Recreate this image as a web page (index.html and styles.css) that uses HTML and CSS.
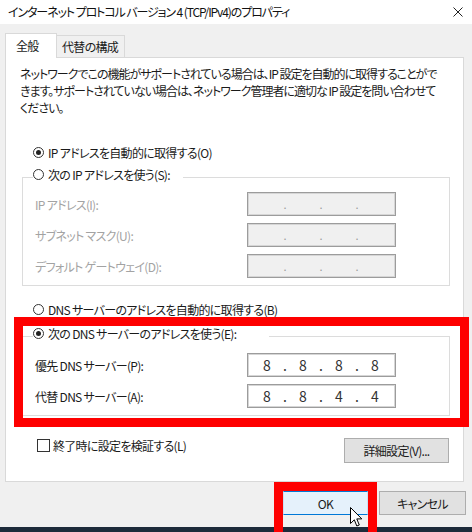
FILE: index.html
```html
<!DOCTYPE html>
<html lang="ja">

<head>
	<title>インターネット プロトコル バージョン 4 (TCP/IPv4)のプロパティ</title>
	<meta charset="UTF-8">
	<meta name="viewport" content="width=device-width, initial-scale=1.0">
	<link rel="stylesheet" href="styles.css">
</head>

<body>
	<div class="window">
		<div class="titlebar">
			<span class="title">インターネット プロトコル バージョン 4 (TCP/IPv4)のプロパティ</span>
			<svg class="close" width="10" height="10" viewBox="0 0 10 10">
				<path d="M0.5 0.5 L9.5 9.5 M9.5 0.5 L0.5 9.5" stroke="#222" stroke-width="1" fill="none" />
			</svg>
		</div>

		<div class="tabs">
			<div class="tab active">全般</div>
			<div class="tab">代替の構成</div>
		</div>

		<div class="panel">
			<div class="intro">
				<span class="intro-line">ネットワークでこの機能がサポートされている場合は、IP 設定を自動的に取得することがで</span>
				<span class="intro-line">きます。サポートされていない場合は、ネットワーク管理者に適切な IP 設定を問い合わせて</span>
				<span class="intro-line">ください。</span>
			</div>

			<div class="radio-row auto-ip"><span class="radio checked"></span>IP アドレスを自動的に取得する(O)</div>

			<fieldset class="group disabled ip-group">
				<legend><span class="radio"></span>次の IP アドレスを使う(S):</legend>
				<div class="field">
					<span class="field-label">IP アドレス(I):</span>
					<div class="ipbox"><span class="oct"></span><span class="dot">.</span><span class="oct"></span><span class="dot">.</span><span class="oct"></span><span class="dot">.</span><span class="oct"></span></div>
				</div>
				<div class="field">
					<span class="field-label">サブネット マスク(U):</span>
					<div class="ipbox"><span class="oct"></span><span class="dot">.</span><span class="oct"></span><span class="dot">.</span><span class="oct"></span><span class="dot">.</span><span class="oct"></span></div>
				</div>
				<div class="field">
					<span class="field-label">デフォルト ゲートウェイ(D):</span>
					<div class="ipbox"><span class="oct"></span><span class="dot">.</span><span class="oct"></span><span class="dot">.</span><span class="oct"></span><span class="dot">.</span><span class="oct"></span></div>
				</div>
			</fieldset>

			<div class="radio-row auto-dns"><span class="radio"></span>DNS サーバーのアドレスを自動的に取得する(B)</div>

			<div class="marked">
				<fieldset class="group dns-group">
					<legend><span class="radio checked"></span>次の DNS サーバーのアドレスを使う(E):</legend>
					<div class="field">
						<span class="field-label">優先 DNS サーバー(P):</span>
						<div class="ipbox"><span class="oct">8</span><span class="dot">.</span><span class="oct">8</span><span class="dot">.</span><span class="oct">8</span><span class="dot">.</span><span class="oct">8</span></div>
					</div>
					<div class="field">
						<span class="field-label">代替 DNS サーバー(A):</span>
						<div class="ipbox"><span class="oct">8</span><span class="dot">.</span><span class="oct">8</span><span class="dot">.</span><span class="oct">4</span><span class="dot">.</span><span class="oct">4</span></div>
					</div>
				</fieldset>
			</div>

			<div class="panel-foot">
				<div class="check-row"><span class="checkbox"></span>終了時に設定を検証する(L)</div>
				<button class="btn advanced">詳細設定(V)...</button>
			</div>
		</div>

		<div class="actions">
			<div class="ok-wrap">
				<button class="btn ok">OK</button>
				<svg class="cursor" width="13" height="21" viewBox="0 0 13 21">
					<path d="M0.5 0.5 L0.5 16.5 L4.3 12.8 L6.8 19 L9.3 18 L6.8 11.9 L11.8 11.9 Z" fill="#fff" stroke="#000" stroke-width="1" stroke-linejoin="round" />
				</svg>
			</div>
			<button class="btn">キャンセル</button>
		</div>

		<div class="taskbar"></div>
	</div>
</body>

</html>
```

FILE: styles.css
```css
* {
	box-sizing: border-box;
}

html,
body {
	margin: 0;
	height: 100%;
	overflow: hidden;
}

body {
	background-color: #f0f0f0;
	font-family: "Noto Sans CJK JP", sans-serif;
	font-size: 12px;
	font-feature-settings: "palt";
	letter-spacing: -0.7px;
	color: #1a1a1a;
}

.titlebar {
	height: 24px;
	background-color: #fff;
	display: flex;
	align-items: center;
	justify-content: space-between;
	padding: 0 9px 0 8px;
}

.title {
	line-height: 24px;
	letter-spacing: -1.1px;
	color: #111;
}

.tabs {
	display: flex;
	margin-top: 9px;
	padding-left: 5px;
	position: relative;
	z-index: 1;
}

.tab {
	height: 22px;
	margin-top: 2px;
	padding: 0 6px 0 5px;
	line-height: 21px;
	border: 1px solid #d9d9d9;
	border-left: none;
	border-bottom: none;
	background-color: #f0f0f0;
}

.tab.active {
	height: 25px;
	margin-top: 0;
	margin-bottom: -1px;
	width: 52px;
	padding-left: 10px;
	line-height: 23px;
	border-left: 1px solid #d9d9d9;
	background-color: #fff;
}

.panel {
	margin: 0 8px 0 5px;
	height: 425px;
	background-color: #fff;
	border: 1px solid #d9d9d9;
}

.intro {
	display: flex;
	flex-direction: column;
	align-items: flex-start;
	margin-top: 7px;
	padding-left: 14px;
	line-height: 17px;
	letter-spacing: -1px;
}

.intro-line {
	white-space: nowrap;
}

.radio-row {
	display: flex;
	align-items: center;
	height: 17px;
	margin-left: 27px;
}

.auto-ip {
	margin-top: 28px;
}

.auto-dns {
	margin-top: 15px;
}

.radio {
	width: 11px;
	height: 11px;
	border: 1px solid #333;
	border-radius: 50%;
	margin-right: 4px;
	display: flex;
	align-items: center;
	justify-content: center;
	flex: none;
}

.radio.checked::after {
	content: "";
	width: 5px;
	height: 5px;
	border-radius: 50%;
	background-color: #222;
}

.group {
	margin: 0;
	padding: 0 0 7px 12px;
	border: 1px solid #dcdcdc;
}

.group legend {
	display: flex;
	align-items: center;
	height: 23px;
	padding: 0 13px 6px 0;
	margin-left: -2px;
	color: #1a1a1a;
}

.dns-group legend {
	padding-right: 33px;
}

.ip-group {
	margin: 5px 13px 0 16px;
}

.marked {
	position: relative;
	margin: 7px 13px 0 16px;
}

.marked::after {
	content: "";
	position: absolute;
	top: -8px;
	left: -8px;
	right: -19px;
	bottom: -11px;
	border: 9px solid #fe0000;
	pointer-events: none;
}

.field {
	display: flex;
	align-items: center;
	height: 24px;
	margin-bottom: 7px;
}

.field:last-child {
	margin-bottom: 0;
}

.group .field:first-of-type {
	margin-top: 3px;
}

.dns-group .field:first-of-type {
	margin-top: 5px;
}

.field-label {
	width: 212px;
}

.disabled .field-label {
	color: #a3a3a3;
}

.ipbox {
	width: 149px;
	height: 24px;
	display: flex;
	align-items: center;
	padding-left: 10px;
	border: 1px solid #9c9c9c;
	box-shadow: inset 0 0 0 1px #d6d6d6;
	background-color: #fff;
	font-size: 14px;
	letter-spacing: 0;
	color: #333;
}

.disabled .ipbox {
	background-color: #f0f0f0;
	color: #9a9a9a;
	font-size: 11px;
}

.oct,
.dot {
	width: 18px;
	text-align: center;
}

.panel-foot {
	display: flex;
	justify-content: space-between;
	align-items: flex-start;
	margin: 22px 14px 0 31px;
}

.check-row {
	display: flex;
	align-items: center;
	height: 14px;
}

.checkbox {
	width: 13px;
	height: 13px;
	border: 1px solid #333;
	margin-right: 3px;
}

.btn {
	font: inherit;
	letter-spacing: inherit;
	color: #1a1a1a;
	height: 25px;
	padding: 0;
	background-color: #e1e1e1;
	border: 1px solid #adadad;
}

.advanced {
	width: 105px;
}

.actions {
	display: flex;
	justify-content: flex-end;
	gap: 11px;
	margin-top: 9px;
	padding-right: 6px;
}

.actions .btn {
	width: 87px;
	height: 24px;
}

.ok-wrap {
	position: relative;
}

.ok-wrap::after {
	content: "";
	position: absolute;
	top: -9px;
	left: -9px;
	right: -9px;
	bottom: -40px;
	border: 9px solid #fe0000;
}

.actions .ok {
	width: 85px;
	background-color: #e5f1fb;
	border: 1px solid #0078d7;
	border-left-color: #c9e0f5;
	border-right-color: #c9e0f5;
}

.cursor {
	position: absolute;
	left: 67px;
	top: 16px;
	z-index: 2;
}

.taskbar {
	height: 6px;
	margin-top: 12px;
	background-color: #1d2b3a;
}
```
